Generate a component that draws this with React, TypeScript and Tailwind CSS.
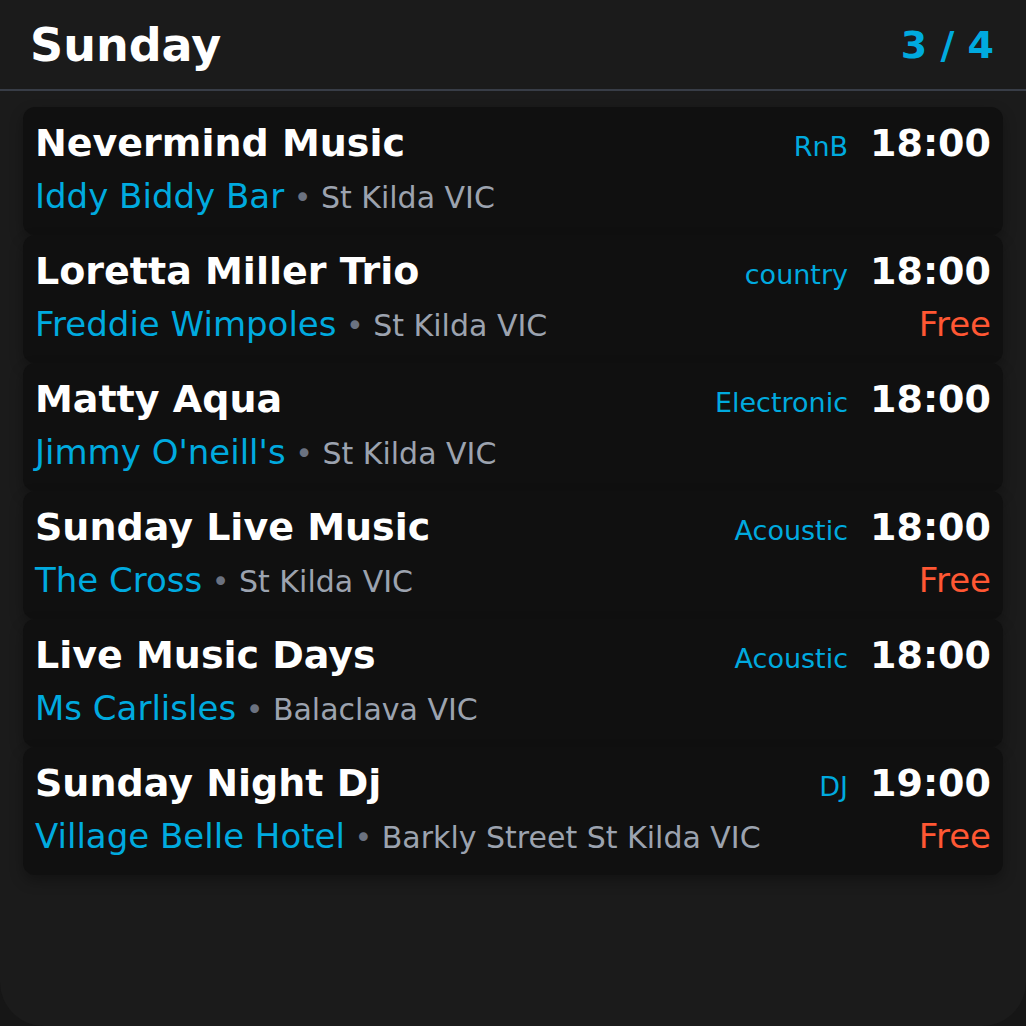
const events = [
  { title: "Nevermind Music", genre: "RnB", time: "18:00", venue: "Iddy Biddy Bar", place: "St Kilda VIC", free: false },
  { title: "Loretta Miller Trio", genre: "country", time: "18:00", venue: "Freddie Wimpoles", place: "St Kilda VIC", free: true },
  { title: "Matty Aqua", genre: "Electronic", time: "18:00", venue: "Jimmy O'neill's", place: "St Kilda VIC", free: false },
  { title: "Sunday Live Music", genre: "Acoustic", time: "18:00", venue: "The Cross", place: "St Kilda VIC", free: true },
  { title: "Live Music Days", genre: "Acoustic", time: "18:00", venue: "Ms Carlisles", place: "Balaclava VIC", free: false },
  { title: "Sunday Night Dj", genre: "DJ", time: "19:00", venue: "Village Belle Hotel", place: "Barkly Street St Kilda VIC", free: true },
];

function EventCard({ e }: { e: (typeof events)[number] }) {
  return (
    <div className="h-[128px] rounded-xl bg-[#101010] px-3 pt-[14px] shadow-[0_6px_14px_rgba(0,0,0,0.3)]">
      <div className="flex items-baseline justify-between">
        <span className="text-[38px] leading-[44px] font-bold text-white">{e.title}</span>
        <div className="flex items-baseline gap-[22px]">
          <span className="text-[27px] leading-[44px] text-[#00aadf]">{e.genre}</span>
          <span className="text-[38px] leading-[44px] font-bold text-white">{e.time}</span>
        </div>
      </div>
      <div className="mt-[7px] flex items-baseline justify-between">
        <div className="flex items-baseline">
          <span className="text-[34px] leading-[40px] text-[#00aadf]">{e.venue}</span>
          <span className="text-[30px] leading-[40px] text-[#9ca3af] whitespace-pre">
            <span className="text-[#6b7280]"> • </span>
            {e.place}
          </span>
        </div>
        {e.free && <span className="text-[34px] leading-[40px] text-[#ff5733]">Free</span>}
      </div>
    </div>
  );
}

export default function App() {
  return (
    <div className="min-h-screen bg-[#161616]" style={{ fontFamily: "'DejaVu Sans', 'Liberation Sans', sans-serif" }}>
      <div className="h-[1026px] rounded-b-[44px] bg-[#1b1b1b]">
        <header className="flex h-[91px] items-center justify-between border-b-2 border-[#383d47] pl-[30px] pr-[32px] pt-[2px]">
          <h1 className="text-[46px] font-bold text-white">Sunday</h1>
          <span className="text-[38px] font-bold text-[#00aadf]">3 / 4</span>
        </header>
        <div className="mt-4 flex flex-col px-[23px]">
          {events.map((e) => (
            <EventCard key={e.title} e={e} />
          ))}
        </div>
      </div>
    </div>
  );
}
